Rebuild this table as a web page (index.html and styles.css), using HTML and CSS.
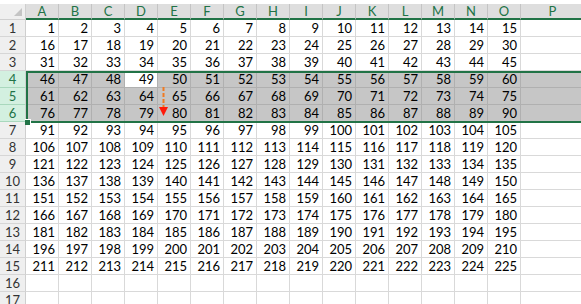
FILE: index.html
```html
<!DOCTYPE html>
<html>
<head>
<meta charset="utf-8">
<link rel="stylesheet" href="styles.css">
</head>
<body>
<div class="sheet">
  <div class="row head">
    <div class="corner"><span class="tri"></span></div>
    <div class="ch">A</div><div class="ch">B</div><div class="ch">C</div><div class="ch">D</div><div class="ch">E</div><div class="ch">F</div><div class="ch">G</div><div class="ch">H</div><div class="ch">I</div><div class="ch">J</div><div class="ch">K</div><div class="ch">L</div><div class="ch">M</div><div class="ch">N</div><div class="ch">O</div><div class="ch wide">P</div>
  </div>
  <div class="row"><div class="rh">1</div><div class="c">1</div><div class="c">2</div><div class="c">3</div><div class="c">4</div><div class="c">5</div><div class="c">6</div><div class="c">7</div><div class="c">8</div><div class="c">9</div><div class="c">10</div><div class="c">11</div><div class="c">12</div><div class="c">13</div><div class="c">14</div><div class="c">15</div><div class="c wide"></div></div>
  <div class="row"><div class="rh">2</div><div class="c">16</div><div class="c">17</div><div class="c">18</div><div class="c">19</div><div class="c">20</div><div class="c">21</div><div class="c">22</div><div class="c">23</div><div class="c">24</div><div class="c">25</div><div class="c">26</div><div class="c">27</div><div class="c">28</div><div class="c">29</div><div class="c">30</div><div class="c wide"></div></div>
  <div class="row"><div class="rh">3</div><div class="c">31</div><div class="c">32</div><div class="c">33</div><div class="c">34</div><div class="c">35</div><div class="c">36</div><div class="c">37</div><div class="c">38</div><div class="c">39</div><div class="c">40</div><div class="c">41</div><div class="c">42</div><div class="c">43</div><div class="c">44</div><div class="c">45</div><div class="c wide"></div></div>
  <div class="row sel"><div class="rh">4</div><div class="c">46</div><div class="c">47</div><div class="c">48</div><div class="c act">49</div><div class="c">50</div><div class="c">51</div><div class="c">52</div><div class="c">53</div><div class="c">54</div><div class="c">55</div><div class="c">56</div><div class="c">57</div><div class="c">58</div><div class="c">59</div><div class="c">60</div><div class="c wide"></div></div>
  <div class="row sel"><div class="rh">5</div><div class="c">61</div><div class="c">62</div><div class="c">63</div><div class="c">64</div><div class="c">65</div><div class="c">66</div><div class="c">67</div><div class="c">68</div><div class="c">69</div><div class="c">70</div><div class="c">71</div><div class="c">72</div><div class="c">73</div><div class="c">74</div><div class="c">75</div><div class="c wide"></div></div>
  <div class="row sel"><div class="rh">6</div><div class="c">76</div><div class="c">77</div><div class="c">78</div><div class="c">79</div><div class="c">80</div><div class="c">81</div><div class="c">82</div><div class="c">83</div><div class="c">84</div><div class="c">85</div><div class="c">86</div><div class="c">87</div><div class="c">88</div><div class="c">89</div><div class="c">90</div><div class="c wide"></div></div>
  <div class="row"><div class="rh">7</div><div class="c">91</div><div class="c">92</div><div class="c">93</div><div class="c">94</div><div class="c">95</div><div class="c">96</div><div class="c">97</div><div class="c">98</div><div class="c">99</div><div class="c">100</div><div class="c">101</div><div class="c">102</div><div class="c">103</div><div class="c">104</div><div class="c">105</div><div class="c wide"></div></div>
  <div class="row"><div class="rh">8</div><div class="c">106</div><div class="c">107</div><div class="c">108</div><div class="c">109</div><div class="c">110</div><div class="c">111</div><div class="c">112</div><div class="c">113</div><div class="c">114</div><div class="c">115</div><div class="c">116</div><div class="c">117</div><div class="c">118</div><div class="c">119</div><div class="c">120</div><div class="c wide"></div></div>
  <div class="row"><div class="rh">9</div><div class="c">121</div><div class="c">122</div><div class="c">123</div><div class="c">124</div><div class="c">125</div><div class="c">126</div><div class="c">127</div><div class="c">128</div><div class="c">129</div><div class="c">130</div><div class="c">131</div><div class="c">132</div><div class="c">133</div><div class="c">134</div><div class="c">135</div><div class="c wide"></div></div>
  <div class="row"><div class="rh">10</div><div class="c">136</div><div class="c">137</div><div class="c">138</div><div class="c">139</div><div class="c">140</div><div class="c">141</div><div class="c">142</div><div class="c">143</div><div class="c">144</div><div class="c">145</div><div class="c">146</div><div class="c">147</div><div class="c">148</div><div class="c">149</div><div class="c">150</div><div class="c wide"></div></div>
  <div class="row"><div class="rh">11</div><div class="c">151</div><div class="c">152</div><div class="c">153</div><div class="c">154</div><div class="c">155</div><div class="c">156</div><div class="c">157</div><div class="c">158</div><div class="c">159</div><div class="c">160</div><div class="c">161</div><div class="c">162</div><div class="c">163</div><div class="c">164</div><div class="c">165</div><div class="c wide"></div></div>
  <div class="row"><div class="rh">12</div><div class="c">166</div><div class="c">167</div><div class="c">168</div><div class="c">169</div><div class="c">170</div><div class="c">171</div><div class="c">172</div><div class="c">173</div><div class="c">174</div><div class="c">175</div><div class="c">176</div><div class="c">177</div><div class="c">178</div><div class="c">179</div><div class="c">180</div><div class="c wide"></div></div>
  <div class="row"><div class="rh">13</div><div class="c">181</div><div class="c">182</div><div class="c">183</div><div class="c">184</div><div class="c">185</div><div class="c">186</div><div class="c">187</div><div class="c">188</div><div class="c">189</div><div class="c">190</div><div class="c">191</div><div class="c">192</div><div class="c">193</div><div class="c">194</div><div class="c">195</div><div class="c wide"></div></div>
  <div class="row"><div class="rh">14</div><div class="c">196</div><div class="c">197</div><div class="c">198</div><div class="c">199</div><div class="c">200</div><div class="c">201</div><div class="c">202</div><div class="c">203</div><div class="c">204</div><div class="c">205</div><div class="c">206</div><div class="c">207</div><div class="c">208</div><div class="c">209</div><div class="c">210</div><div class="c wide"></div></div>
  <div class="row"><div class="rh">15</div><div class="c">211</div><div class="c">212</div><div class="c">213</div><div class="c">214</div><div class="c">215</div><div class="c">216</div><div class="c">217</div><div class="c">218</div><div class="c">219</div><div class="c">220</div><div class="c">221</div><div class="c">222</div><div class="c">223</div><div class="c">224</div><div class="c">225</div><div class="c wide"></div></div>
  <div class="row"><div class="rh">16</div><div class="c"></div><div class="c"></div><div class="c"></div><div class="c"></div><div class="c"></div><div class="c"></div><div class="c"></div><div class="c"></div><div class="c"></div><div class="c"></div><div class="c"></div><div class="c"></div><div class="c"></div><div class="c"></div><div class="c"></div><div class="c wide"></div></div>
  <div class="row"><div class="rh">17</div><div class="c"></div><div class="c"></div><div class="c"></div><div class="c"></div><div class="c"></div><div class="c"></div><div class="c"></div><div class="c"></div><div class="c"></div><div class="c"></div><div class="c"></div><div class="c"></div><div class="c"></div><div class="c"></div><div class="c"></div><div class="c wide"></div></div>

  <div class="selbox"></div>
  <div class="handle"></div>
  <svg class="arrow" width="12" height="32" viewBox="0 0 12 32">
    <line x1="5.5" y1="1" x2="5.5" y2="21" stroke="#f07a22" stroke-width="2" stroke-dasharray="4 2"/>
    <polygon points="1,21 10,21 5.5,30" fill="#ff1a0a"/>
  </svg>
</div>
</body>
</html>
```

FILE: styles.css
```css
html, body {
  margin: 0;
  padding: 0;
  background: #ffffff;
  overflow: hidden;
}
body {
  width: 581px;
  height: 304px;
}
.sheet {
  position: relative;
  padding-top: 4px;
  width: 600px;
  font-family: Lato, "Liberation Sans", sans-serif;
  font-size: 13px;
  color: #000;
}
.row {
  display: flex;
  height: 17px;
}
.row.head {
  height: 16px;
}
.corner {
  position: relative;
  width: 26px;
  flex: none;
  box-sizing: border-box;
  background: #efefef;
  border-right: 1px solid #cfcfcf;
  border-bottom: 1px solid #cfcfcf;
}
.tri {
  position: absolute;
  right: 3px;
  bottom: 3px;
  width: 0;
  height: 0;
  border-left: 8px solid transparent;
  border-bottom: 8px solid #c4c4c4;
}
.ch {
  width: 33px;
  flex: none;
  box-sizing: border-box;
  background: #dedede;
  border-right: 1px solid #c4c4c4;
  border-bottom: 2px solid #217346;
  color: #217346;
  text-align: center;
  line-height: 15px;
  font-size: 13px;
}
.ch.wide, .c.wide {
  width: 64px;
}
.rh {
  width: 26px;
  flex: none;
  box-sizing: border-box;
  background: #efefef;
  border-right: 1px solid #cfcfcf;
  border-bottom: 1px solid #d6d6d6;
  color: #333;
  text-align: center;
  line-height: 16px;
}
.c {
  width: 33px;
  flex: none;
  box-sizing: border-box;
  border-right: 1px solid #d9d9d9;
  border-bottom: 1px solid #d9d9d9;
  text-align: right;
  padding-right: 3px;
  line-height: 16px;
  white-space: nowrap;
}
.sel .c {
  background: #c6c6c6;
  border-color: #b0b0b0;
}
.sel .c.act {
  background: #ffffff;
}
.sel .rh {
  background: #d3f0e0;
  color: #217346;
  border-bottom-color: #a9d8bd;
}
.selbox {
  position: absolute;
  left: 26px;
  top: 71px;
  width: 600px;
  height: 52px;
  box-sizing: border-box;
  border: 2px solid #217346;
  pointer-events: none;
}
.handle {
  position: absolute;
  left: 25px;
  top: 119px;
  width: 5px;
  height: 5px;
  background: #217346;
  border-top: 1px solid #ffffff;
  border-right: 1px solid #ffffff;
}
.arrow {
  position: absolute;
  left: 158px;
  top: 86px;
}
```
